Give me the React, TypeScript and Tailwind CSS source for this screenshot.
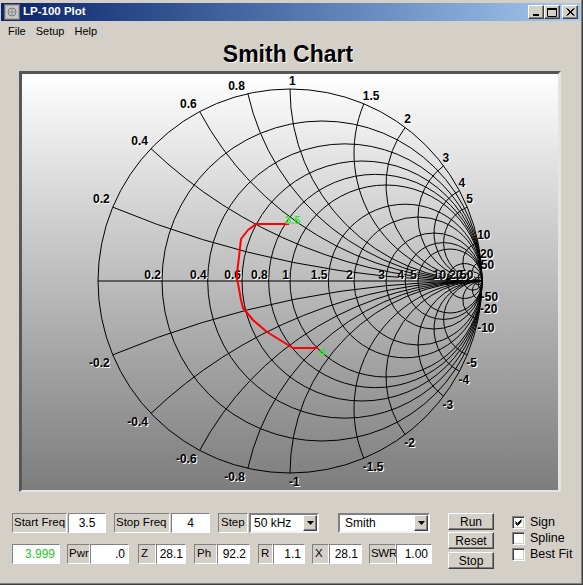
import React from 'react'

const FONT = "font-['Liberation_Sans',Arial,Helvetica,sans-serif]"
const SVG_FONT = 'Liberation Sans, Arial, sans-serif'

// smith chart geometry, in page pixels
const CX = 290
const CY = 281
const R = 192
const GRID = [0.2, 0.4, 0.6, 0.8, 1, 1.5, 2, 3, 4, 5, 10, 20, 50]

const TRACE: [number, number][] = [
  [289, 224], [256, 224], [248, 230], [241, 239], [239, 257], [237, 273],
  [237, 278], [241, 300], [243, 308], [253, 320], [267, 332], [280, 340],
  [293, 348], [318, 348],
]

// where the reactance arc x meets the outer circle
function edgePoint(x: number) {
  const d = x * x + 1
  return { x: CX + (R * (x * x - 1)) / d, y: CY - (R * 2 * x) / d }
}

function ShadowText({ x, y, anchor = 'start', children }: { x: number; y: number; anchor?: 'start' | 'end' | 'middle'; children: React.ReactNode }) {
  return (
    <g fontFamily={SVG_FONT} fontWeight="bold" fontSize={12} textAnchor={anchor}>
      <text x={x + 1} y={y + 1} fill="#ffffff">{children}</text>
      <text x={x} y={y} fill="#000000">{children}</text>
    </g>
  )
}

function SmithChart() {
  return (
    <svg width={536} height={416} viewBox="22 74 536 416" className="block">
      <g fill="none" stroke="#000" strokeWidth={1}>
        <circle cx={CX} cy={CY} r={R} />
        <line x1={CX - R} y1={CY} x2={CX + R} y2={CY} />
        {GRID.map(r => (
          <circle key={`r${r}`} cx={CX + (R * r) / (r + 1)} cy={CY} r={R / (r + 1)} />
        ))}
        {GRID.flatMap(x => [x, -x]).map(x => {
          const p = edgePoint(x)
          const rad = R / Math.abs(x)
          return <path key={`x${x}`} d={`M ${p.x} ${p.y} A ${rad} ${rad} 0 0 ${x > 0 ? 0 : 1} ${CX + R} ${CY}`} />
        })}
      </g>

      {/* resistance labels on the axis */}
      {GRID.map(r => (
        <ShadowText key={`rl${r}`} x={CX + (R * (r - 1)) / (r + 1) - 1} y={CY - 2.5} anchor="end">
          {String(r)}
        </ShadowText>
      ))}

      {/* reactance labels round the rim */}
      {GRID.flatMap(x => [x, -x]).map(x => {
        const p = edgePoint(x)
        const left = p.x < CX - 1
        return (
          <ShadowText key={`xl${x}`} x={left ? p.x - 3 : p.x - 1} y={x > 0 ? p.y - 4 : p.y + 12.5} anchor={left ? 'end' : 'start'}>
            {String(x)}
          </ShadowText>
        )
      })}

      <polyline points={TRACE.map(p => p.join(',')).join(' ')} fill="none" stroke="#ff0000" strokeWidth={2} strokeLinejoin="round" />
      <g fontFamily={SVG_FONT} fontWeight="bold" fontSize={11} fill="#2ee62e">
        <text x={285} y={224}>3.5</text>
        <text x={319} y={356}>4</text>
      </g>
    </svg>
  )
}

function WinButton({ children, className = '' }: { children: React.ReactNode; className?: string }) {
  return (
    <div className={`flex h-[14px] w-[16px] items-center justify-center border border-t-white border-l-white border-r-[#404040] border-b-[#404040] bg-[#d4d0c8] shadow-[inset_-1px_-1px_0_#808080] ${className}`}>
      {children}
    </div>
  )
}

function TitleBar() {
  return (
    <div className="flex h-[18px] items-center bg-linear-to-r from-[#0a246a] to-[#a6caf0] pr-[3px]">
      <svg width="16" height="16" viewBox="0 0 16 16" className="ml-[3px]">
        <rect x="0.5" y="0.5" width="15" height="15" fill="#a8a8a8" stroke="#6d6d6d" />
        <rect x="2" y="2" width="12" height="12" fill="#c9c9c9" />
        <circle cx="8" cy="8" r="4" fill="none" stroke="#7a7a7a" />
        <path d="M4 8h8M8 4v8" stroke="#8a8a8a" />
      </svg>
      <span className="ml-[3px] text-[11.5px] font-bold text-white">LP-100 Plot</span>
      <div className="ml-auto flex">
        <WinButton>
          <svg width="8" height="8" viewBox="0 0 8 8"><rect x="1" y="6" width="6" height="2" fill="#000" /></svg>
        </WinButton>
        <WinButton>
          <svg width="10" height="9" viewBox="0 0 10 9"><path d="M0.5 1.5h9v7h-9z" fill="none" stroke="#000" /><rect x="0" y="0" width="10" height="2" fill="#000" /></svg>
        </WinButton>
        <WinButton className="ml-[2px]">
          <svg width="9" height="8" viewBox="0 0 9 8"><path d="M0.5 0.5l7 7M1.5 0.5l7 7M7.5 0.5l-7 7M8.5 0.5l-7 7" stroke="#000" /></svg>
        </WinButton>
      </div>
    </div>
  )
}

function Label({ children, className = '', pad = 'pl-[2px]' }: { children: React.ReactNode; className?: string; pad?: string }) {
  return (
    <div className={`flex h-[20px] shrink-0 items-center overflow-visible whitespace-nowrap border border-t-[#808080] border-l-[#808080] border-r-white border-b-white text-[11.5px] ${pad} ${className}`}>
      {children}
    </div>
  )
}

function Value({ children, className = '' }: { children: React.ReactNode; className?: string }) {
  return (
    <div className={`flex h-[20px] shrink-0 items-center border border-t-[#808080] border-l-[#808080] border-r-white border-b-white bg-white text-[12px] ${className}`}>
      {children}
    </div>
  )
}

function Combo({ text, className = '' }: { text: string; className?: string }) {
  return (
    <div className={`flex h-[20px] shrink-0 items-center border-2 border-t-[#808080] border-l-[#808080] border-r-white border-b-[#f2f2f2] bg-white text-[12px] ${className}`}>
      <span>{text}</span>
      <div className="ml-auto flex h-full w-[14px] items-center justify-center border border-t-white border-l-white border-r-[#404040] border-b-[#404040] bg-[#d4d0c8] shadow-[inset_-1px_-1px_0_#808080]">
        <svg width="7" height="4" viewBox="0 0 7 4"><path d="M0 0h7L3.5 4z" fill="#000" /></svg>
      </div>
    </div>
  )
}

function Button({ children, className = '' }: { children: React.ReactNode; className?: string }) {
  return (
    <div className={`flex h-[17px] w-[46px] items-center justify-center border border-t-white border-l-white border-r-[#404040] border-b-[#404040] bg-[#d4d0c8] text-[12px] shadow-[inset_-1px_-1px_0_#808080] ${className}`}>
      {children}
    </div>
  )
}

function Check({ label, checked = false, className = '' }: { label: string; checked?: boolean; className?: string }) {
  return (
    <div className={`flex h-[13px] items-center ${className}`}>
      <div className="flex h-[13px] w-[13px] items-center justify-center border border-t-[#808080] border-l-[#808080] border-r-white border-b-white bg-white shadow-[inset_1px_1px_0_#404040,inset_-1px_-1px_0_#d4d0c8]">
        {checked && (
          <svg width="7" height="7" viewBox="0 0 7 7"><path d="M0.5 2.5l2 2 4-4M0.5 3.5l2 2 4-4M0.5 4.5l2 2 4-4" fill="none" stroke="#000" /></svg>
        )}
      </div>
      <span className="ml-[5px] text-[12.5px]">{label}</span>
    </div>
  )
}

export default function App() {
  return (
    <div className={`h-[585px] w-[583px] overflow-hidden border-r border-b border-[#404040] bg-[#d4d0c8] text-black ${FONT}`}>
      <div className="h-full border-r border-b border-[#808080] pt-[3px] pl-[1px]">
        <TitleBar />

        <div className="flex h-[20px] items-center gap-[10px] pl-[7px] text-[11px]">
          <span>File</span>
          <span>Setup</span>
          <span>Help</span>
        </div>

        <div className="flex h-[30px] justify-center pt-[2px] pr-[6px] text-[23px] leading-none font-bold [text-shadow:1px_1px_0_#ffffff]">
          Smith Chart
        </div>

        <div className="ml-[18px] h-[421px] w-[542px] border-t-[3px] border-l-[3px] border-r-[3px] border-b-[2px] border-t-[#575757] border-l-[#575757] border-r-[#e4e4e4] border-b-[#e4e4e4] bg-linear-to-b from-white to-[#7d7d7d]">
          <SmithChart />
        </div>

        <div className="mt-[21px] ml-[11px] flex items-start">
          <div className="w-[420px] shrink-0">
            <div className="flex items-center">
              <Label className="w-[55px]" pad="pl-[1px]">Start Freq</Label>
              <Value className="ml-[1px] w-[38px] justify-center">3.5</Value>
              <Label className="ml-[8px] w-[56px]" pad="pl-[1px]">Stop Freq</Label>
              <Value className="ml-[1px] w-[39px] justify-center">4</Value>
              <Label className="ml-[8px] w-[30px]">Step</Label>
              <Combo text="50 kHz" className="ml-[1px] w-[70px] pl-[3px]" />
              <Combo text="Smith" className="ml-[19px] w-[92px] pl-[5px]" />
            </div>
            <div className="mt-[11px] flex items-center">
              <Value className="w-[48px] justify-end pr-[4px] text-[#1ec81e]">3.999</Value>
              <Label className="ml-[7px] w-[23px]" pad="pl-[1px]">Pwr</Label>
              <Value className="w-[39px] justify-end pr-[3px]">.0</Value>
              <Label className="ml-[9px] w-[18px]">Z</Label>
              <Value className="w-[30px] justify-end pr-[2px]">28.1</Value>
              <Label className="ml-[8px] w-[23px]">Ph</Label>
              <Value className="w-[33px] justify-end pr-[3px]">92.2</Value>
              <Label className="ml-[8px] w-[15px]">R</Label>
              <Value className="w-[32px] justify-end pr-[3px]">1.1</Value>
              <Label className="ml-[7px] w-[17px]">X</Label>
              <Value className="w-[33px] justify-end pr-[3px]">28.1</Value>
              <Label className="ml-[7px] w-[27px] text-[10.5px] tracking-[-0.3px]" pad="pl-[1px]">SWR</Label>
              <Value className="w-[36px] justify-end pr-[3px]">1.00</Value>
            </div>
          </div>

          <div className="ml-[16px] flex flex-col">
            <Button>Run</Button>
            <Button className="mt-[2px]">Reset</Button>
            <Button className="mt-[3px]">Stop</Button>
          </div>

          <div className="mt-[3px] ml-[18px] flex flex-col">
            <Check label="Sign" checked />
            <Check label="Spline" className="mt-[2.5px]" />
            <Check label="Best Fit" className="mt-[3px]" />
          </div>
        </div>
      </div>
    </div>
  )
}
